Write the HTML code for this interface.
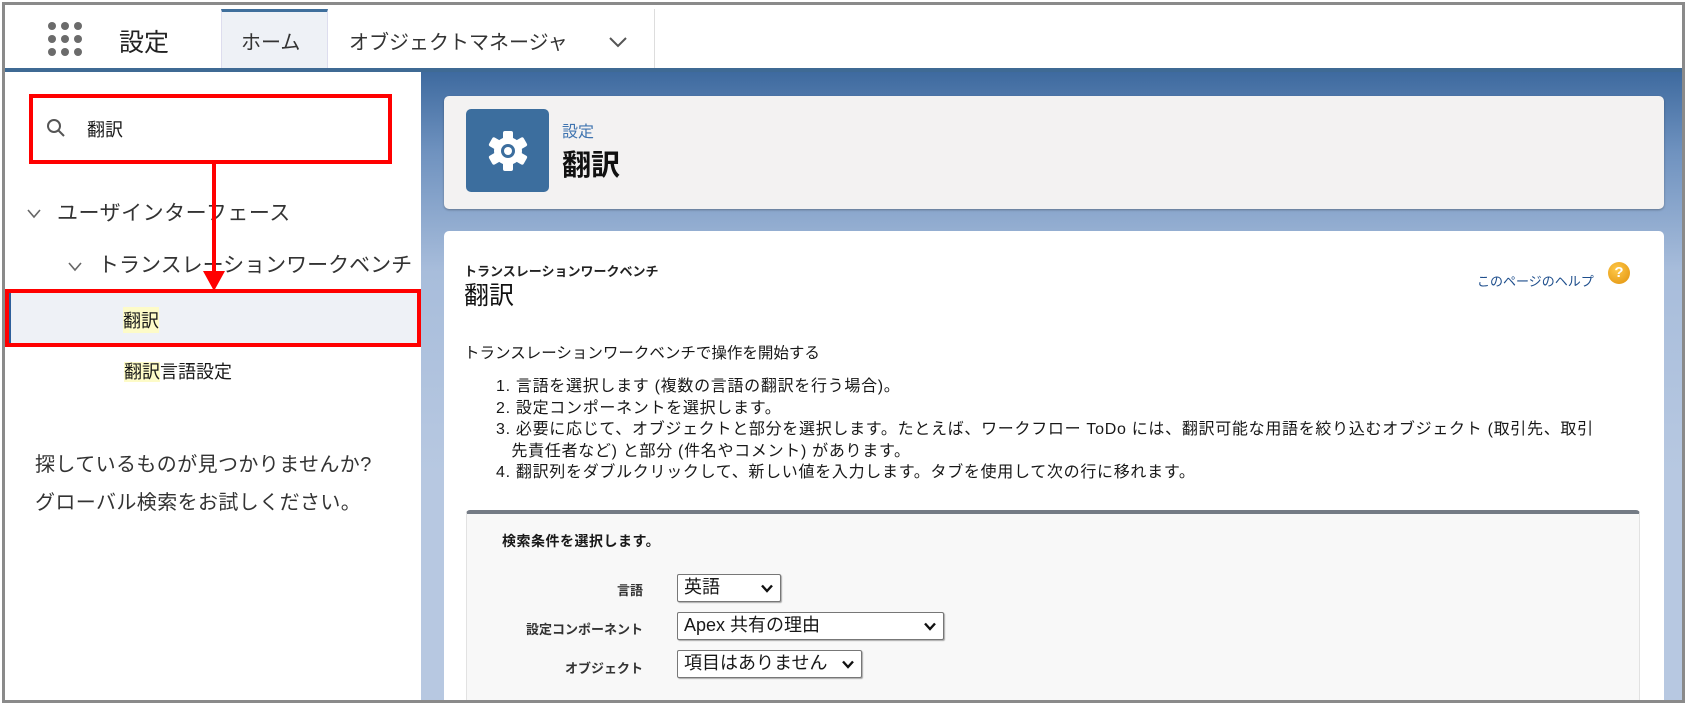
<!DOCTYPE html>
<html><head><meta charset="utf-8"><style>
*{margin:0;padding:0;box-sizing:border-box}
body{width:1689px;height:710px;background:#fff;position:relative;overflow:hidden;font-family:"Liberation Sans","Noto Sans CJK JP",sans-serif;color:#181818}
.a{position:absolute;white-space:nowrap}
#frame{left:2px;top:2px;width:1683px;height:701px;border:3px solid #8a8a8a;overflow:hidden}
.dot{position:absolute;width:8px;height:8px;border-radius:50%;background:#6b6b6b}
.sel{position:absolute;border:1px solid #777;background:#fff;border-radius:2px;font-size:18px;padding:0 6px;line-height:25px;box-shadow:1px 1px 1px #aaa}
.sel svg{position:absolute;right:7px;top:9px}
</style></head><body>
<div class="a" id="frame">
 <div class="a" style="left:0;top:0;width:1680px;height:63px;background:#fff"></div>
 <div class="dot" style="left:43px;top:17px"></div><div class="dot" style="left:56px;top:17px"></div><div class="dot" style="left:69px;top:17px"></div>
 <div class="dot" style="left:43px;top:30px"></div><div class="dot" style="left:56px;top:30px"></div><div class="dot" style="left:69px;top:30px"></div>
 <div class="dot" style="left:43px;top:43px"></div><div class="dot" style="left:56px;top:43px"></div><div class="dot" style="left:69px;top:43px"></div>
 <div class="a" style="left:114px;top:18px;font-size:25px;color:#222">設定</div>
 <div class="a" style="left:216px;top:4px;width:107px;height:59px;background:#eef1f6;border-top:3px solid #3f6f9c;border-left:1px solid #dde;border-right:1px solid #dde"></div>
 <div class="a" style="left:236px;top:21px;font-size:20px;color:#333">ホーム</div>
 <div class="a" style="left:344px;top:21px;font-size:20px;color:#333">オブジェクトマネージャ</div>
 <svg class="a" style="left:603px;top:30px" width="20" height="14"><path d="M2 3 L10 11 L18 3" fill="none" stroke="#555" stroke-width="2"/></svg>
 <div class="a" style="left:649px;top:4px;width:1px;height:59px;background:#ddd"></div>
 <div class="a" style="left:0;top:63px;width:1680px;height:4px;background:#3f6a94"></div>
 <div class="a" style="left:416px;top:67px;width:1264px;height:640px;background:linear-gradient(#3e6a9f 0px,#6f92bf 80px,#a8bddb 200px,#b7c8e1 400px)"></div>
 <div class="a" style="left:0;top:67px;width:416px;height:640px;background:#fff"></div>
 <div class="a" style="left:24px;top:89px;width:363px;height:70px;border:4px solid #f00"></div>
 <svg class="a" style="left:41px;top:113px" width="20" height="20"><circle cx="8" cy="8" r="6" fill="none" stroke="#555" stroke-width="2"/><path d="M12.5 12.5 L18 18" stroke="#555" stroke-width="2"/></svg>
 <div class="a" style="left:82px;top:111px;font-size:18px">翻訳</div>
 <svg class="a" style="left:21px;top:203px" width="16" height="12"><path d="M2 2 L8 9 L14 2" fill="none" stroke="#666" stroke-width="1.6"/></svg>
 <div class="a" style="left:52px;top:192px;font-size:21px;color:#333;letter-spacing:0.5px">ユーザインターフェース</div>
 <svg class="a" style="left:62px;top:256px" width="16" height="12"><path d="M2 2 L8 9 L14 2" fill="none" stroke="#666" stroke-width="1.6"/></svg>
 <div class="a" style="left:93px;top:244px;font-size:21px;color:#333">トランスレーションワークベンチ</div>
 <div class="a" style="left:2px;top:286px;width:413px;height:54px;background:#eef1f6;border-left:4px solid #2e5f9b"></div>
 <div class="a" style="left:0;top:284px;width:416px;height:58px;border:4px solid #f00"></div>
 <div class="a" style="left:118px;top:302px;font-size:18px;background:#fdfbc8">翻訳</div>
 <div class="a" style="left:119px;top:353px;font-size:18px"><span style="background:#fdfbc8">翻訳</span>言語設定</div>
 <div class="a" style="left:30px;top:441px;font-size:20px;color:#333;line-height:38px;letter-spacing:0.4px">探しているものが見つかりませんか?<br>グローバル検索をお試しください。</div>
 <div class="a" style="left:207px;top:159px;width:4px;height:112px;background:#f00"></div>
 <svg class="a" style="left:198px;top:266px" width="22" height="20"><path d="M0 0 L22 0 L11 20 Z" fill="#f00"/></svg>
 <div class="a" style="left:439px;top:91px;width:1220px;height:113px;background:#f3f2f2;border-radius:5px;box-shadow:0 1px 2px rgba(0,0,0,.3)"></div>
 <div class="a" style="left:461px;top:104px;width:83px;height:83px;background:#3c6e9e;border-radius:5px"></div>
 <svg class="a" style="left:480px;top:123px" width="46" height="46" viewBox="0 0 46 46"><g fill="#fff"><circle cx="23" cy="23" r="14"/><rect x="18" y="3" width="10" height="9" rx="2"/><rect x="18" y="34" width="10" height="9" rx="2"/><rect x="18" y="3" width="10" height="9" rx="2" transform="rotate(60 23 23)"/><rect x="18" y="34" width="10" height="9" rx="2" transform="rotate(60 23 23)"/><rect x="18" y="3" width="10" height="9" rx="2" transform="rotate(-60 23 23)"/><rect x="18" y="34" width="10" height="9" rx="2" transform="rotate(-60 23 23)"/></g><circle cx="23" cy="23" r="7" fill="#3c6e9e"/><circle cx="23" cy="23" r="4" fill="#fff"/></svg>
 <div class="a" style="left:557px;top:113px;font-size:16px;color:#3f74b0">設定</div>
 <div class="a" style="left:557px;top:137px;font-size:29px;font-weight:bold;color:#111">翻訳</div>
 <div class="a" style="left:439px;top:226px;width:1220px;height:500px;background:#fff;border-radius:5px"></div>
 <div class="a" style="left:459px;top:256px;font-size:13px;font-weight:bold;color:#222">トランスレーションワークベンチ</div>
 <div class="a" style="left:459px;top:271px;font-size:25px;color:#111">翻訳</div>
 <div class="a" style="left:1472px;top:266px;font-size:13px;color:#1e4e8c">このページのヘルプ</div>
 <div class="a" style="left:1603px;top:257px;width:22px;height:22px;border-radius:50%;background:radial-gradient(circle at 40% 35%,#ffc94a,#e0900a);color:#fff;font-weight:bold;font-size:15px;text-align:center;line-height:22px">?</div>
 <div class="a" style="left:459px;top:336px;font-size:15.5px">トランスレーションワークベンチで操作を開始する</div>
 <div class="a" style="left:491px;top:371px;font-size:16px;line-height:21.5px;letter-spacing:0.7px">
 1. 言語を選択します (複数の言語の翻訳を行う場合)。<br>
 2. 設定コンポーネントを選択します。<br>
 3. 必要に応じて、オブジェクトと部分を選択します。たとえば、ワークフロー ToDo には、翻訳可能な用語を絞り込むオブジェクト (取引先、取引<br>
 &nbsp;&nbsp;&nbsp;先責任者など) と部分 (件名やコメント) があります。<br>
 4. 翻訳列をダブルクリックして、新しい値を入力します。タブを使用して次の行に移れます。</div>
 <div class="a" style="left:461px;top:505px;width:1174px;height:210px;background:#f8f8f8;border-top:4px solid #747b85;border-radius:4px 4px 0 0;border-left:1px solid #e2e2e2;border-right:1px solid #e2e2e2"></div>
 <div class="a" style="left:497px;top:526px;font-size:14px;font-weight:bold;letter-spacing:0.5px">検索条件を選択します。</div>
 <div class="a" style="left:420px;top:575px;width:218px;text-align:right;font-size:13px;font-weight:bold;color:#333">言語</div>
 <div class="a" style="left:420px;top:614px;width:218px;text-align:right;font-size:13px;font-weight:bold;color:#333">設定コンポーネント</div>
 <div class="a" style="left:420px;top:653px;width:218px;text-align:right;font-size:13px;font-weight:bold;color:#333">オブジェクト</div>
 <div class="sel" style="left:672px;top:569px;width:104px;height:28px">英語<svg width="12" height="9"><path d="M1 1.5 L6 7 L11 1.5" fill="none" stroke="#111" stroke-width="2.4"/></svg></div>
 <div class="sel" style="left:672px;top:607px;width:267px;height:28px">Apex 共有の理由<svg width="12" height="9"><path d="M1 1.5 L6 7 L11 1.5" fill="none" stroke="#111" stroke-width="2.4"/></svg></div>
 <div class="sel" style="left:672px;top:645px;width:185px;height:28px">項目はありません<svg width="12" height="9"><path d="M1 1.5 L6 7 L11 1.5" fill="none" stroke="#111" stroke-width="2.4"/></svg></div>
</div>
</body></html>
